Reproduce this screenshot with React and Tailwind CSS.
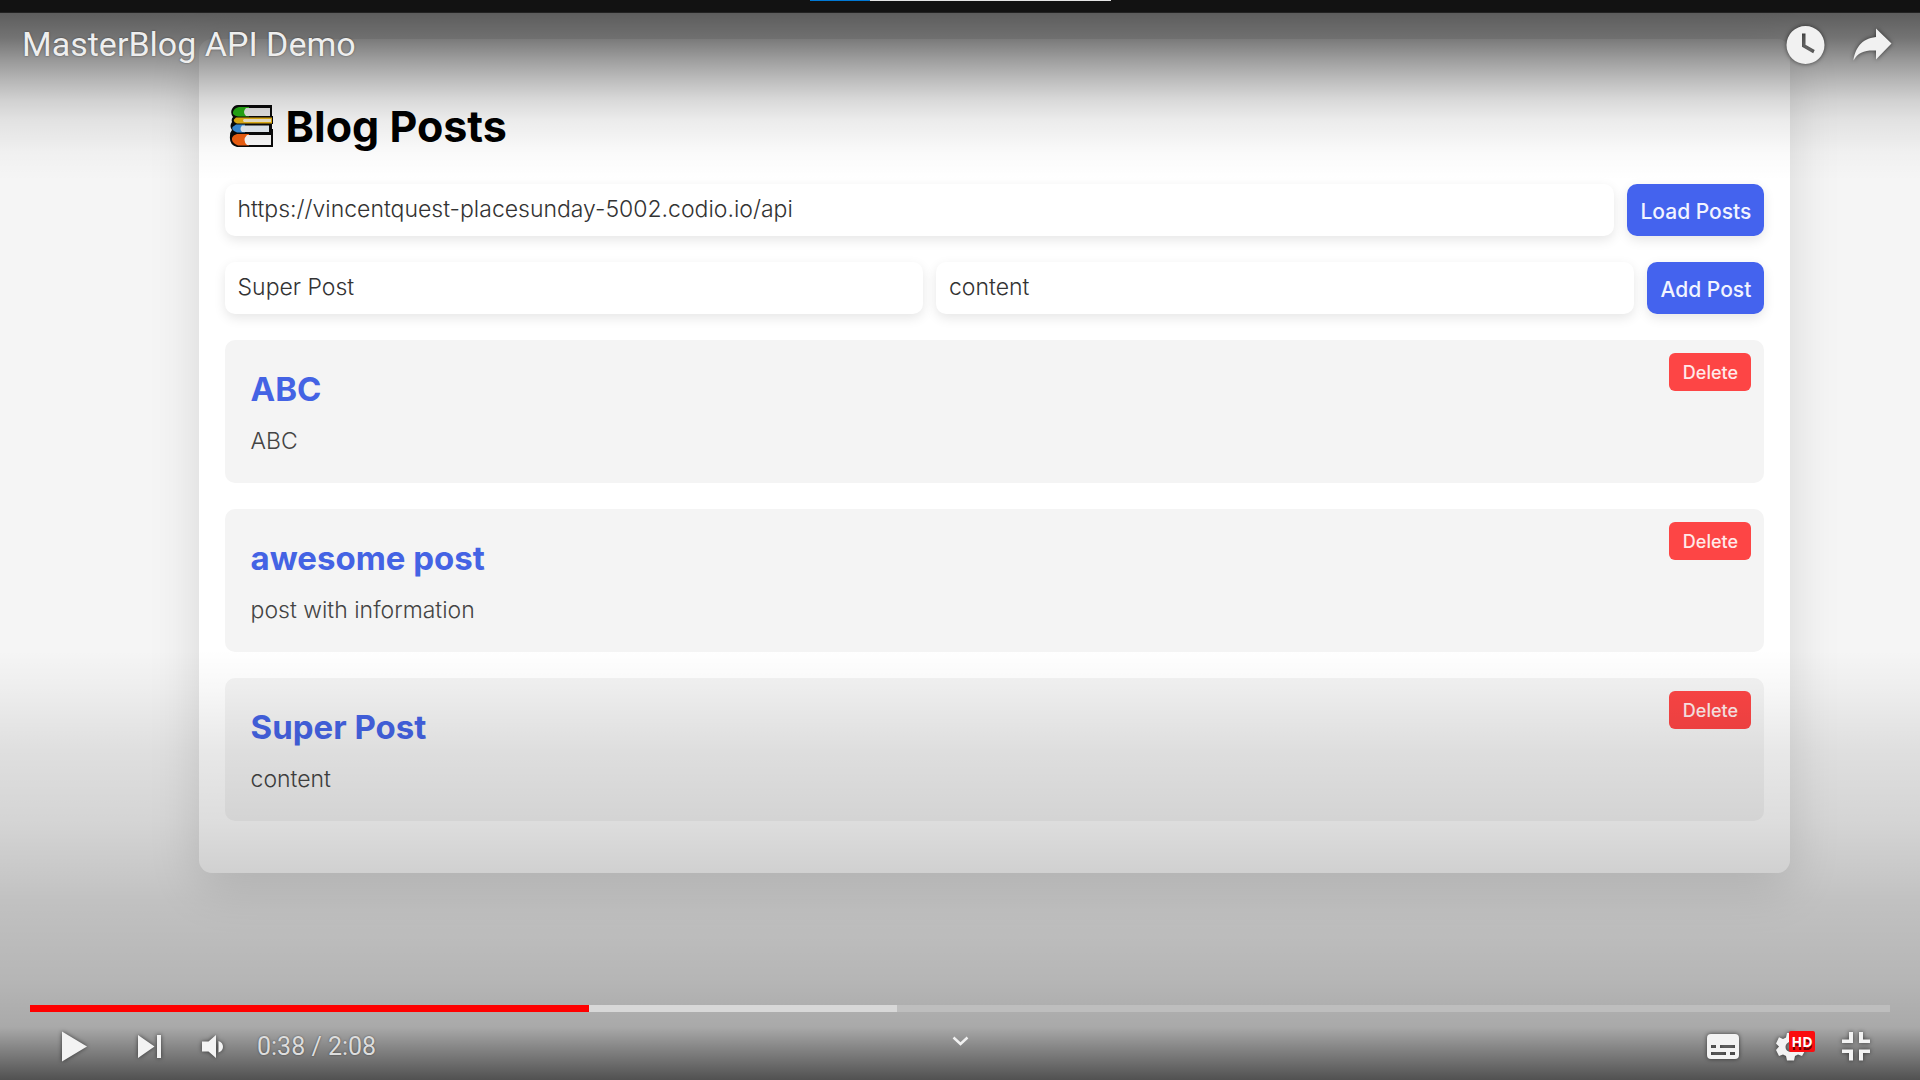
import React from "react";

const POSTS = [
  { title: "ABC", content: "ABC" },
  { title: "awesome post", content: "post with information" },
  { title: "Super Post", content: "content" },
];

const field =
  "h-[52px] min-w-0 flex-1 rounded-[10px] bg-white px-[13px] pb-[2px] text-[23px] font-light text-[#333] shadow-[0_4px_12px_rgba(0,0,0,0.1)] outline-none";
const action =
  "h-[52px] shrink-0 rounded-[10px] bg-[#4463ee] pt-[4px] text-center text-[21px] font-medium text-[#f2f4ff] shadow-[0_4px_12px_rgba(0,0,0,0.1)]";
const iconShade = "block drop-shadow-[0_0_2px_rgba(0,0,0,0.6)]";

function Books() {
  return (
    <svg width="44" height="44" viewBox="0 0 44 44" aria-hidden="true">
      <path d="M9 1H43V12H44V20H43V25H44V43H8Q0 41 1 32Q1 28 3 26Q0 22 3 18Q2 15 4 13Q1 9 3 5Q5 1 9 1Z" fill="#0a0a0a" />
      <path d="M10 3H20V12.500H9Q3 11 4 8Q5 4 10 3Z" fill="#27b016" />
      <path d="M17 4H41V12H17Q13 8 17 4Z" fill="#ececec" />
      <path d="M7 13.500H43V19.500H8Q4 18 5 15.500Z" fill="#e8b414" />
      <path d="M15 15H42V18H15Q13 16.500 15 15Z" fill="#f2ead0" />
      <path d="M7 20.500H16V28.500H8Q2 26 3.500 23Z" fill="#3b8edb" />
      <path d="M13 21.500H40V28H13Q10 25 13 21.500Z" fill="#e8eff5" />
      <path d="M8 30H20V41.500H9Q2 39 3 34Q4 31 8 30Z" fill="#ee5f12" />
      <path d="M18 31H42V41H18Q13 36 18 31Z" fill="#fafafa" />
    </svg>
  );
}

function Post({ title, content }) {
  return (
    <article className="flex items-start justify-between rounded-[10px] bg-[#f4f4f4] pt-[13px] pr-[13px] pb-[26px] pl-[26px]">
      <div className="pt-[13px]">
        <h2 className="text-[33px] leading-[46px] font-bold text-[#4463e4]">{title}</h2>
        <p className="mt-[13px] text-[23px] leading-[32px] font-light text-[#444]">{content}</p>
      </div>
      <button className="h-[38px] w-[82px] rounded-[6px] bg-[#fd4545] text-center text-[18px] font-medium text-[#ffe9e9]">Delete</button>
    </article>
  );
}

function BlogPage() {
  return (
    <main className="mx-auto mt-[39px] w-[86%] rounded-[13px] bg-white px-[26px] pt-[55px] pb-[52px] shadow-[0_13px_52px_rgba(0,0,0,0.13)]">
      <h1 className="ml-[4px] flex items-center gap-[13px] text-[43px] leading-[64px] font-bold text-black">
        <Books />
        Blog Posts
      </h1>
      <div className="mt-[26px] flex gap-[13px]">
        <input aria-label="API base URL" className={field} defaultValue="https://vincentquest-placesunday-5002.codio.io/api" />
        <button className={`${action} w-[137px]`}>Load Posts</button>
      </div>
      <div className="mt-[26px] flex gap-[13px]">
        <input aria-label="Post title" className={field} defaultValue="Super Post" />
        <input aria-label="Post content" className={field} defaultValue="content" />
        <button className={`${action} w-[117px]`}>Add Post</button>
      </div>
      <section className="mt-[26px] flex flex-col gap-[26px]">
        {POSTS.map((p) => (
          <Post key={p.title} {...p} />
        ))}
      </section>
    </main>
  );
}

function TopBar() {
  return (
    <header className="flex h-[168px] items-start justify-between bg-[linear-gradient(to_bottom,rgba(0,0,0,0.62)_0px,rgba(0,0,0,0.53)_25px,rgba(0,0,0,0.38)_47px,rgba(0,0,0,0.26)_67px,rgba(0,0,0,0.15)_87px,rgba(0,0,0,0.08)_107px,rgba(0,0,0,0.02)_140px,transparent_168px)] pr-[28px] pl-[22px]">
      <a href="#video" className="mt-[11px] text-[34px] leading-[40px] text-[#eee] [text-shadow:0_0_2px_rgba(0,0,0,0.5)]">
        MasterBlog API Demo
      </a>
      <div className="mt-[11px] flex gap-[27px]">
        <button aria-label="Watch later">
          <svg className={iconShade} width="40" height="40" viewBox="0 0 40 40">
            <path
              fillRule="evenodd"
              fill="#f1f1f1"
              d="M20.500 2A19 19 0 1 0 20.500 40A19 19 0 1 0 20.500 2ZM17 9.500H20.500V20.800L29.700 26.100L28.200 29.300L17 22.800Z"
            />
          </svg>
        </button>
        <button aria-label="Share">
          <svg className={iconShade} width="40" height="40" viewBox="0 0 40 40">
            <path fill="#f1f1f1" d="M24 4.500L39.500 19.500L24 35.500V26.500C13 26 6 28 1.500 36.500C3 25 9 14.500 24 13Z" />
          </svg>
        </button>
      </div>
    </header>
  );
}

function Controls() {
  return (
    <footer className="flex h-[430px] flex-col justify-end bg-[linear-gradient(to_bottom,transparent_0px,rgba(0,0,0,0.03)_40px,rgba(0,0,0,0.09)_100px,rgba(0,0,0,0.135)_172px,rgba(0,0,0,0.18)_220px,rgba(0,0,0,0.21)_250px,rgba(0,0,0,0.26)_330px,rgba(0,0,0,0.31)_377px,rgba(0,0,0,0.47)_400px,rgba(0,0,0,0.67)_430px)] px-[30px]">
      <input
        type="range"
        aria-label="Seek"
        min="0"
        max="128"
        defaultValue="38"
        className="block h-[7px] w-full appearance-none bg-[linear-gradient(to_right,#ff0000_30.050%,#d8d8d8_30.050%,#d8d8d8_46.600%,#bebebe_46.600%)] [&::-webkit-slider-thumb]:appearance-none"
      />
      <div className="grid h-[68px] grid-cols-[1fr_auto_1fr] items-center">
        <div className="flex items-center pl-[28px]">
          <button aria-label="Play">
            <svg className={iconShade} width="34" height="40" viewBox="0 0 34 40">
              <path fill="#f3f3f3" d="M4 5.500V35.500L29 20.500Z" />
            </svg>
          </button>
          <button aria-label="Next" className="ml-[44px]">
            <svg className={iconShade} width="30" height="40" viewBox="0 0 30 40">
              <path fill="#f3f3f3" d="M2 9V32L18.500 20.500ZM21 9H25V32H21Z" />
            </svg>
          </button>
          <button aria-label="Mute" className="ml-[34px]">
            <svg className={iconShade} width="30" height="40" viewBox="0 0 30 40">
              <path fill="#f3f3f3" d="M2 15.500V25.500H8.500L16 32V9L8.500 15.500ZM18.500 15C24.500 17 24.500 24.500 18.500 26.500Z" />
            </svg>
          </button>
          <time className="ml-[27px] pt-[2px] text-[25px] leading-[36px] text-[#ddd] [text-shadow:0_0_2px_rgba(0,0,0,0.5)]">0:38 / 2:08</time>
        </div>
        <button aria-label="More videos" className="mb-[10px]">
          <svg className="block" width="24" height="24" viewBox="0 0 24 24" fill="none" stroke="#f1f1f1" strokeWidth="2.500">
            <path d="M5.500 8.500L12.500 15L19.500 8.500" />
          </svg>
        </button>
        <div className="flex items-center justify-end pr-[16px]">
          <button aria-label="Subtitles">
            <svg className={iconShade} width="36" height="40" viewBox="0 0 36 40">
              <path
                fillRule="evenodd"
                fill="#f3f3f3"
                d="M5 8H29Q33 8 33 12V29Q33 33 29 33H5Q1 33 1 29V12Q1 8 5 8ZM5 19V22H10V19ZM14 19V22H29V19ZM5 26V29H20V26ZM24 26V29H29V26Z"
              />
            </svg>
          </button>
          <button aria-label="Settings, HD" className="relative ml-[34px]">
            <svg className={iconShade} width="32" height="40" viewBox="0 0 32 40">
              <path
                fillRule="evenodd"
                fill="#f3f3f3"
                d="M11 7H18L19 11.500L22 13L26 11.200L29.500 17.500L26.500 20.500L29.500 24L26 30L22 28.500L19 30L18 34.500H11L10 30L7 28.500L3 30L0 24L3 20.500L0 17.500L3 11.200L7 13L10 11.500ZM14.500 16A5 5 0 1 0 14.500 26A5 5 0 1 0 14.500 16Z"
              />
            </svg>
            <span className="absolute top-[5px] left-[13px] h-[21px] w-[26px] rounded-[2px] bg-[#fb0d0f] text-center font-['Open_Sans',sans-serif] text-[14px] leading-[22px] font-bold text-white [text-shadow:0_3px_0_rgba(70,0,0,0.8)]">
              HD
            </span>
          </button>
          <button aria-label="Exit full screen" className="ml-[32px]">
            <svg className={iconShade} width="34" height="40" viewBox="0 0 34 40">
              <path
                fill="#f3f3f3"
                d="M9 6H13V17H2V13.500H9ZM19 6H23V13.500H30V17H19ZM2 23.500H13V34.500H9V27H2ZM19 23.500H30V27H23V34.500H19Z"
              />
            </svg>
          </button>
        </div>
      </div>
    </footer>
  );
}

export default function App() {
  return (
    <div className="relative min-h-screen bg-[#f5f5f5] pb-[205px] pl-[69px] font-['Inter',sans-serif] [display:flow-root]">
      <BlogPage />
      <div className="absolute inset-0 flex flex-col font-['Roboto',sans-serif]">
        <div className="flex h-[13px] items-start justify-center border-b border-[#222] bg-[#121212]">
          <span className="h-px w-[60px] bg-[#0078d4]" />
          <span className="h-px w-[241px] bg-[#e5e5e5]" />
        </div>
        <TopBar />
        <div className="flex-1" />
        <Controls />
      </div>
    </div>
  );
}
